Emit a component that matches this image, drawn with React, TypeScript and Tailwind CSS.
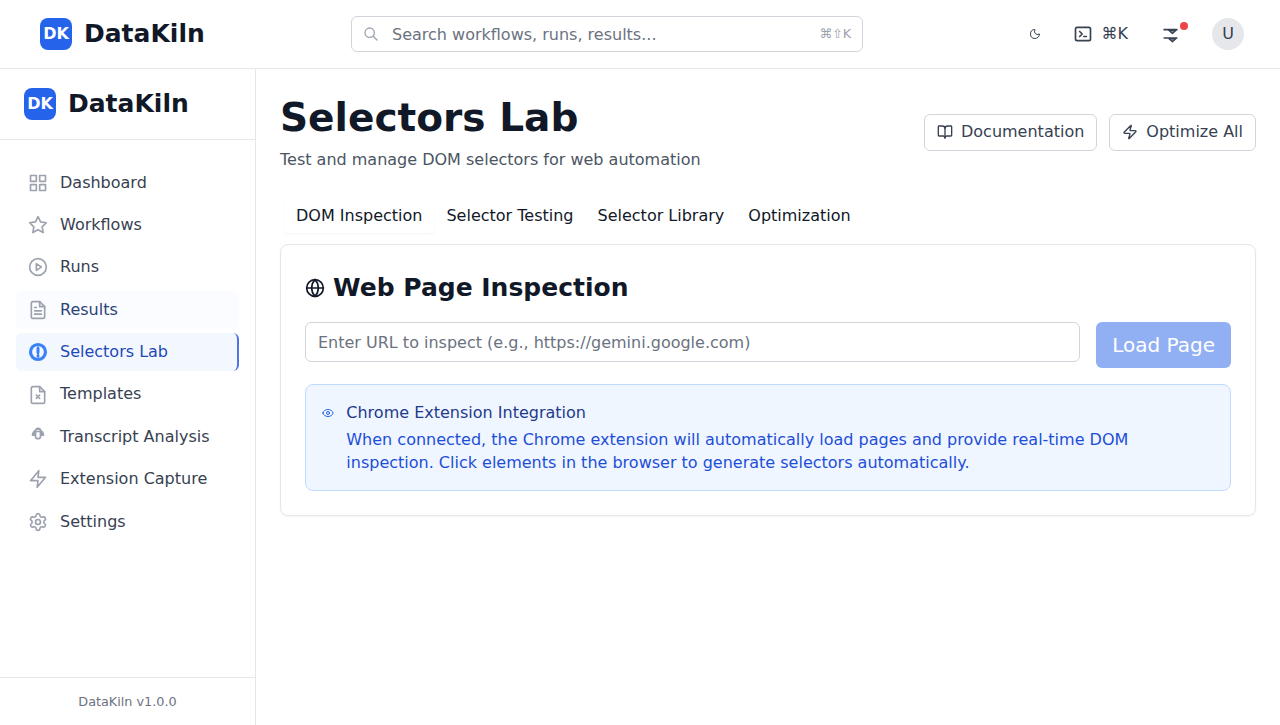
import React from 'react';
import { BookOpen, Globe, Moon, Settings, Zap } from 'lucide-react';

function Stroke({ children, className = 'size-5' }: { children: React.ReactNode; className?: string }) {
  return (
    <svg
      viewBox="0 0 24 24"
      fill="none"
      stroke="currentColor"
      strokeWidth={2}
      strokeLinecap="round"
      strokeLinejoin="round"
      className={`${className} shrink-0`}
    >
      {children}
    </svg>
  );
}

function Brand() {
  return (
    <div className="flex items-center gap-3">
      <div className="flex size-8 items-center justify-center rounded-lg bg-[#2563eb] pt-px font-bold text-white">DK</div>
      <span className="text-[25px] leading-[30px] font-bold text-[#111827]">DataKiln</span>
    </div>
  );
}

const filePaths = (
  <>
    <path d="M14 2H6a2 2 0 0 0-2 2v16a2 2 0 0 0 2 2h12a2 2 0 0 0 2-2V8z" />
    <path d="M14 2v6h6" />
  </>
);

const navItems: { label: string; state?: 'hover' | 'active'; icon: React.ReactNode }[] = [
  {
    label: 'Dashboard',
    icon: (
      <>
        <rect x="3" y="3" width="7" height="7" />
        <rect x="14" y="3" width="7" height="7" />
        <rect x="14" y="14" width="7" height="7" />
        <rect x="3" y="14" width="7" height="7" />
      </>
    ),
  },
  {
    label: 'Workflows',
    icon: <path d="M12 2l3.09 6.26L22 9.27l-5 4.87 1.18 6.88L12 17.77l-6.18 3.25L7 14.14 2 9.27l6.91-1.01L12 2z" />,
  },
  {
    label: 'Runs',
    icon: (
      <>
        <circle cx="12" cy="12" r="10" />
        <path d="M10 8l6 4-6 4V8z" />
      </>
    ),
  },
  {
    label: 'Results',
    state: 'hover',
    icon: (
      <>
        {filePaths}
        <path d="M16 13H8M16 17H8M10 9H8" />
      </>
    ),
  },
  {
    label: 'Selectors Lab',
    state: 'active',
    icon: (
      <>
        <circle cx="12" cy="12" r="9" strokeWidth={3.8} />
        <path d="M12 7.5v5M12 16.5v.2" strokeWidth={3.6} />
        <path d="M12 6v12" />
      </>
    ),
  },
  {
    label: 'Templates',
    icon: (
      <>
        {filePaths}
        <path d="M10 12l4 4M14 12l-4 4" />
      </>
    ),
  },
  {
    label: 'Transcript Analysis',
    icon: (
      <>
        <path d="M12 1.5a3 3 0 0 0-3 3V11a3 3 0 0 0 6 0V4.5a3 3 0 0 0-3-3z" />
        <path d="M9 4C6.800 5 5.200 7 5.200 10H9zM15 4c2.200 1 3.800 3 3.800 6H15z" fill="currentColor" strokeWidth={1.5} />
        <path d="M10 3h4M10 5.500h4" strokeWidth={1.6} />
      </>
    ),
  },
  {
    label: 'Extension Capture',
    icon: <path d="M13 2L3 14h9l-1 8 10-12h-9l1-8z" />,
  },
  {
    label: 'Settings',
    icon: <Settings size={24} />,
  },
];

const navStyles = {
  idle: { row: 'text-[#374151]', icon: 'text-[#9ca3af]' },
  hover: { row: 'bg-[#fafcff] text-[#2c4279]', icon: 'text-[#9ca3af]' },
  active: { row: 'border-r-2 border-[#4f74e3] bg-[#f3f8ff] text-[#1f48b8]', icon: 'text-[#3b82f6]' },
};

function TopBar() {
  return (
    <header className="flex h-[69px] shrink-0 items-center justify-between border-b border-[#e5e7eb] pr-9 pl-10">
      <div className="w-[311px] pb-px">
        <Brand />
      </div>
      <div className="flex h-9 w-[512px] items-center rounded-md border border-[#d1d5db] pr-[10.8px] pl-[11px]">
        <Stroke className="mr-[13px] size-4 text-[#9ca3af]">
          <path d="M21 21l-6-6m2-5a7 7 0 11-14 0 7 7 0 0114 0z" />
        </Stroke>
        <span className="grow pt-0.5 text-[#6b7280]">Search workflows, runs, results...</span>
        <span className="text-[12.8px] text-[#9ca3af]">⌘⇧K</span>
      </div>
      <div className="flex grow items-center justify-end text-[#374151]">
        <Moon className="mr-8 size-3" />
        <Stroke className="mr-[9px] size-5">
          <path d="M8 9l3 3-3 3m5 0h3M5 20h14a2 2 0 002-2V6a2 2 0 00-2-2H5a2 2 0 00-2 2v12a2 2 0 002 2z" />
        </Stroke>
        <span className="mr-8">⌘K</span>
        <div className="relative mr-8 size-5">
          <Stroke>
            <path d="M5 6.8h15.200M5 16.800h15.200" />
            <path
              d="M10.500 7.500h8.800l-4.400 3.900zM10.500 17.500h8.800l-4.400 3.900z"
              fill="currentColor"
              fillOpacity={0.6}
              strokeWidth={1.6}
            />
          </Stroke>
          <span className="absolute -top-0.5 -right-2 size-2 rounded-full bg-[#ef4444]" />
        </div>
        <div className="flex size-8 items-center justify-center rounded-full bg-[#e5e7eb]">U</div>
      </div>
    </header>
  );
}

function Sidebar() {
  return (
    <aside className="flex w-64 shrink-0 flex-col border-r border-[#e5e7eb]">
      <div className="flex h-[71px] shrink-0 items-center border-b border-[#e5e7eb] px-6">
        <Brand />
      </div>
      <nav className="flex grow flex-col gap-1 px-4 pt-[23.56px] leading-[22.375px]">
        {navItems.map((item) => {
          const style = navStyles[item.state ?? 'idle'];
          return (
            <a key={item.label} className={`flex items-center gap-3 rounded-md px-3 py-2 ${style.row}`}>
              <span className={style.icon}>
                <Stroke>{item.icon}</Stroke>
              </span>
              {item.label}
            </a>
          );
        })}
      </nav>
      <div className="flex h-12 items-center justify-center border-t border-[#e5e7eb] pt-0.5 text-[12.8px] text-[#6b7280]">
        DataKiln v1.0.0
      </div>
    </aside>
  );
}

function OutlineButton({ icon, children }: { icon: React.ReactNode; children: React.ReactNode }) {
  return (
    <button className="flex h-[37px] items-center gap-2 rounded-md border border-[#d1d5db] px-3 pb-px text-[#374151]">
      {icon}
      {children}
    </button>
  );
}

export default function App() {
  return (
    <div className="flex h-[725px] flex-col overflow-hidden bg-white font-['DejaVu_Sans',sans-serif] text-base leading-[22.4px] text-[#111827]">
      <TopBar />
      <div className="flex min-h-0 grow">
        <Sidebar />
        <main className="min-w-0 grow p-6">
          <div className="flex h-[78px] items-center justify-between">
            <div>
              <h1 className="text-[39.06px] leading-[50.8px] font-bold">Selectors Lab</h1>
              <p className="mt-[5px] text-[#4b5563]">Test and manage DOM selectors for web automation</p>
            </div>
            <div className="flex gap-3 pt-px">
              <OutlineButton icon={<BookOpen className="size-4" />}>Documentation</OutlineButton>
              <OutlineButton icon={<Zap className="size-4" />}>Optimize All</OutlineButton>
            </div>
          </div>
          <div className="mt-6 flex h-[41px] px-1 pt-1 pb-[3px]">
            <div className="flex items-center rounded-sm px-3 shadow-[0_1px_2px_0_rgba(0,0,0,0.05)]">DOM Inspection</div>
            <div className="flex items-center px-3">Selector Testing</div>
            <div className="flex items-center px-3">Selector Library</div>
            <div className="flex items-center px-3">Optimization</div>
          </div>
          <section className="mt-2 rounded-lg border border-[#e5e7eb] p-6 shadow-[0_1px_2px_0_rgba(0,0,0,0.05)]">
            <h2 className="flex items-center gap-2 text-[25px] leading-[37px] font-bold">
              <Globe className="size-5" />
              Web Page Inspection
            </h2>
            <div className="mt-4 flex items-start gap-4">
              <div className="flex h-10 grow items-center rounded-md border border-[#d1d5db] px-3 pt-0.5 text-[#6b7280]">
                Enter URL to inspect (e.g., https://gemini.google.com)
              </div>
              <button className="h-[46px] rounded-md bg-[#2563eb] px-4 text-xl text-white opacity-50">Load Page</button>
            </div>
            <div className="mt-4 flex gap-[12.3px] rounded-lg border border-[#bfdbfe] bg-[#eff6ff] p-4">
              <Stroke className="mt-[6px] size-3 text-[#2563eb]">
                <path d="M1.800 12C3 7.500 7 5 12 5s9 2.500 10.200 7c-1.200 4.500-5.200 7-10.200 7S3 16.500 1.800 12z" />
                <circle cx="12" cy="12" r="3" />
              </Stroke>
              <div>
                <h3 className="leading-6 text-[#1e3a8a]">Chrome Extension Integration</h3>
                <p className="mt-[3px] leading-[23px] text-[#1d4ed8]">
                  When connected, the Chrome extension will automatically load pages and provide real-time DOM
                  <br />
                  inspection. Click elements in the browser to generate selectors automatically.
                </p>
              </div>
            </div>
          </section>
        </main>
      </div>
    </div>
  );
}
